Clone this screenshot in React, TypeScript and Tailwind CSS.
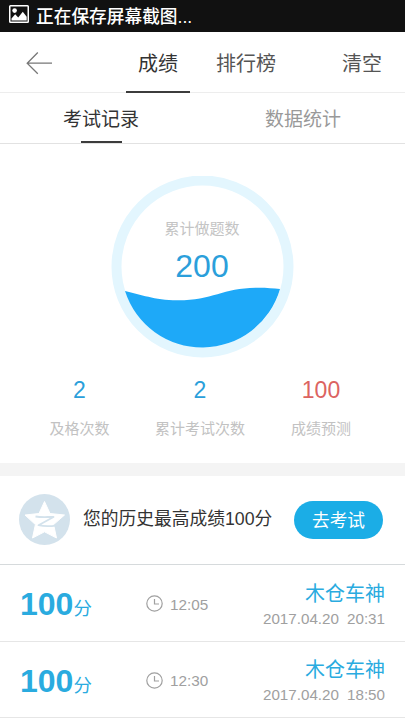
import React from 'react';

const records = [
  { score: 100, time: '12:05', name: '木仓车神', date: '2017.04.20', clock: '20:31' },
  { score: 100, time: '12:30', name: '木仓车神', date: '2017.04.20', clock: '18:50' },
];

const stats = [
  { value: 2, label: '及格次数', box: 'w-[159px]', color: 'text-[#2b9fdb]' },
  { value: 2, label: '累计考试次数', box: 'w-[82px]', color: 'text-[#2b9fdb]' },
  { value: 100, label: '成绩预测', box: 'w-[160px]', color: 'text-[#dc6461]' },
];

const StatusBar: React.FC = () => (
  <div className="flex h-8 items-center bg-[#111111] pl-[9px] text-white">
    <svg width="20" height="18" viewBox="0 0 20 18" className="-mt-[4px] shrink-0">
      <path
        fillRule="evenodd"
        fill="currentColor"
        d="M1.5 0h17A1.5 1.5 0 0 1 20 1.5v15a1.5 1.5 0 0 1-1.5 1.5h-17A1.5 1.5 0 0 1 0 16.5v-15A1.5 1.5 0 0 1 1.5 0ZM1.5 1.5v15h17v-15Z"
      />
      <circle cx="5.6" cy="5.6" r="2.3" fill="currentColor" />
      <path d="M2.5 15.5v-2l3.7-4.3 3 3.2 4.6-5.6 3.9 5v3.7Z" fill="currentColor" />
    </svg>
    <span className="mt-[3px] ml-[7px] text-[17.7px] leading-none font-medium">正在保存屏幕截图...</span>
  </div>
);

const Header: React.FC = () => (
  <header className="flex h-[61px] border-b border-[#ededed] text-[20px] leading-[64px] text-[#555555]">
    <div className="w-[126px] pt-[20px] pl-[26px]">
      <svg width="27" height="23" viewBox="0 0 27 23" fill="none" stroke="#777777" strokeWidth="1.3">
        <path d="M26 11.2H1.2M11.8 .5 1.2 11.2l10.6 10.6" />
      </svg>
    </div>
    <div className="h-[61px] w-[64px] border-b-2 border-[#3c3c3c] text-center text-[#333333]">成绩</div>
    <div className="ml-[26px] w-[60px] whitespace-nowrap">排行榜</div>
    <div className="ml-auto pr-[23px]">清空</div>
  </header>
);

const Tabs: React.FC = () => (
  <nav className="flex h-[51px] border-b border-[#e2e2e2] pr-px text-[19px] leading-[54px]">
    <div className="flex w-1/2 flex-col items-center text-[#333333]">
      <span className="h-[48px]">考试记录</span>
      <span className="h-[2px] w-[41px] shrink-0 bg-[#3c3c3c]" />
    </div>
    <div className="w-1/2 text-center text-[#999999]">数据统计</div>
  </nav>
);

const Gauge: React.FC = () => (
  <div className="relative mx-auto mt-8 h-[182px] w-[183px]">
    <svg width="183" height="182" viewBox="0 0 183 182" className="absolute inset-0">
      <circle cx="91.5" cy="90.5" r="86" fill="#fff" stroke="#e3f6fe" strokeWidth="10" />
      <path
        fill="#1ea9f8"
        d="M14 115C30.5 118.5 42.5 124 66.5 124.3C100.5 124.5 112.5 112 144.5 111.7C154.5 111.5 161.5 112.2 169 113A81 81 0 0 1 14 115Z"
      />
    </svg>
    <div className="relative flex flex-col items-center pt-[45px] pr-px">
      <span className="text-[15px] leading-4 text-[#c4c4c4]">累计做题数</span>
      <span className="mt-[13px] text-[32px] leading-8 text-[#2b9fdb]">200</span>
    </div>
  </div>
);

const BestScore: React.FC = () => (
  <div className="flex h-[89px] items-center border-b border-[#d6dadc] pr-[22px] pl-[19px]">
    <svg width="51" height="51" viewBox="0 0 51 51" className="-mt-px shrink-0">
      <circle cx="25.5" cy="25.5" r="25.5" fill="#d3e2ec" />
      <path
        d="M25.5 7.500 31 19.5 45.5 21 34.6 30.600 37.5 44 25.5 37.8 13.5 44 16.4 30.600 6 21 20 19.5Z"
        fill="#fff"
        stroke="#fff"
        strokeLinejoin="round"
      />
      <path
        d="M16.500 22.500C23 23.500 29 22.800 34.500 23L19.500 31.200C26 32.600 32 32.200 37 31.600"
        fill="none"
        stroke="#d3e2ec"
        strokeWidth="1.800"
        strokeLinejoin="round"
      />
    </svg>
    <span className="ml-[13px] text-[17.75px] leading-none whitespace-nowrap text-[#333333]">您的历史最高成绩100分</span>
    <button className="ml-auto h-[38px] w-[89px] rounded-full bg-[#1bade6] pt-[3px] text-[17.7px] text-white">去考试</button>
  </div>
);

const App: React.FC = () => (
  <div className="h-[720px] w-[405px] overflow-hidden bg-white font-['Liberation_Sans','Noto_Sans_CJK_SC',sans-serif]">
    <StatusBar />
    <Header />
    <Tabs />
    <Gauge />

    <div className="mt-[19px] flex h-[86px]">
      {stats.map((s) => (
        <div key={s.label} className={`flex shrink-0 flex-col items-center ${s.box}`}>
          <span className={`text-[23px] leading-[26px] ${s.color}`}>{s.value}</span>
          <span className="mt-[16px] text-[15px] leading-5 whitespace-nowrap text-[#c2c2c2]">{s.label}</span>
        </div>
      ))}
    </div>

    <div className="h-[13px] bg-[#f4f4f4]" />
    <BestScore />

    {records.map((r) => (
      <div key={r.clock} className="flex h-[76.5px] items-center border-b border-[#e6e6e6] px-5">
        <div className="flex w-[126px] items-baseline pt-[8px] text-[#2aabdf]">
          <span className="text-[32px] leading-10 font-bold">{r.score}</span>
          <span className="text-[18.5px] leading-10">分</span>
        </div>
        <div className="flex items-center pt-[2px] text-[#a0a0a0]">
          <svg width="17" height="17" viewBox="0 0 17 17" fill="none" stroke="currentColor" strokeWidth="1.2">
            <circle cx="8.5" cy="8.5" r="7.7" />
            <path d="M8.5 4v5H13" />
          </svg>
          <span className="mt-px ml-[7px] text-[15.3px] leading-none">{r.time}</span>
        </div>
        <div className="ml-auto flex flex-col items-end pt-[5px]">
          <span className="text-[20px] leading-7 text-[#2aabdf]">{r.name}</span>
          <span className="-mt-px flex gap-2 text-[15.2px] leading-6 text-[#a0a0a0]">
            <span>{r.date}</span>
            <span>{r.clock}</span>
          </span>
        </div>
      </div>
    ))}
  </div>
);

export default App;
